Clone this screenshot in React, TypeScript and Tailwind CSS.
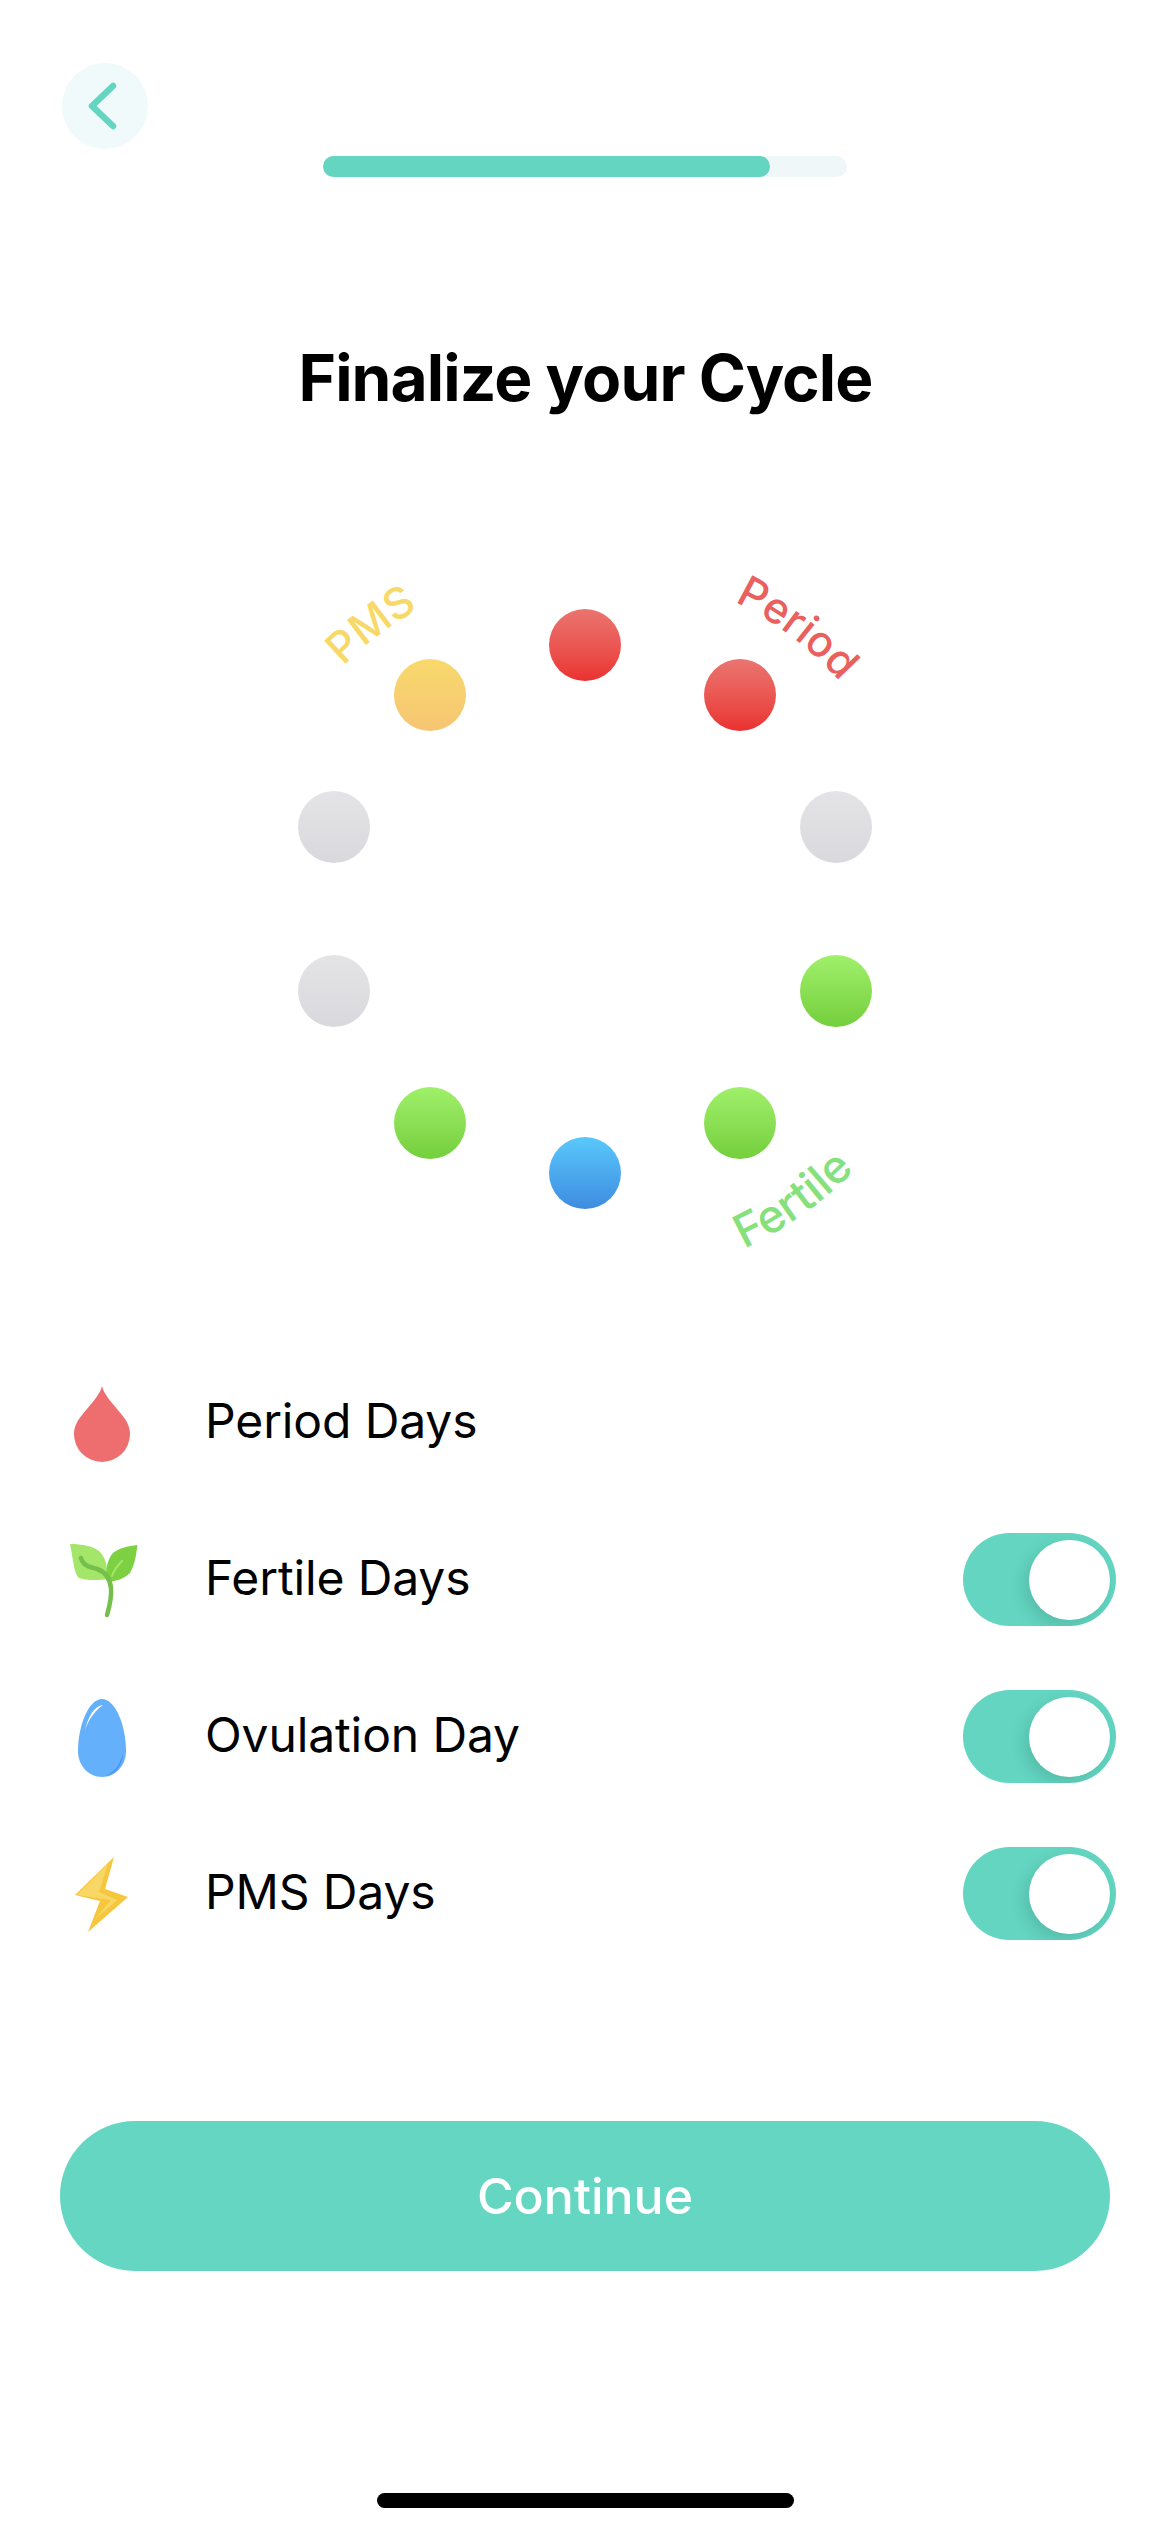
const cx = 585;
const cy = 348; // wheel centre inside the 740px-high canvas

// Arc that the curved labels run along, angle in degrees clockwise from the top.
const pt = (r: number, deg: number) => {
  const a = (deg * Math.PI) / 180;
  return `${(cx + r * Math.sin(a)).toFixed(1)} ${(cy - r * Math.cos(a)).toFixed(1)}`;
};
const arc = (r: number, from: number, to: number, sweep: number) =>
  `M${pt(r, from)} A${r} ${r} 0 0 ${sweep} ${pt(r, to)}`;

const dots = [
  "left-[549px] top-[49px] from-[#ea7470] to-[#ea3030]",
  "left-[704px] top-[99px] from-[#ea7470] to-[#ea3030]",
  "left-[800px] top-[231px] from-[#e4e3e6] to-[#d9d8dc]",
  "left-[800px] top-[395px] from-[#a0f06a] to-[#74cf3c]",
  "left-[704px] top-[527px] from-[#a0f06a] to-[#74cf3c]",
  "left-[549px] top-[577px] from-[#5ac8fb] to-[#3f8ce0]",
  "left-[394px] top-[527px] from-[#a0f06a] to-[#74cf3c]",
  "left-[298px] top-[395px] from-[#e4e3e6] to-[#d9d8dc]",
  "left-[298px] top-[231px] from-[#e4e3e6] to-[#d9d8dc]",
  "left-[394px] top-[99px] from-[#f8d96b] to-[#f6c573]",
];

function Drop() {
  return (
    <svg width="68" height="80" viewBox="0 0 68 80">
      <path d="M32 3C34 12 44 22 52 32C57 38 60 44 60 51A28 28 0 0 1 4 51C4 44 7 38 12 32C20 22 30 12 32 3Z" fill="#ee6e70" />
    </svg>
  );
}

function Sprout() {
  return (
    <svg width="68" height="80" viewBox="0 0 68 80">
      <path d="M0 4C12 4 24 6 30 12C36 18 38 28 37 39C28 41 14 40 9 38C4 34 3 18 0 4Z" fill="#a3e66a" />
      <path d="M67.500 5C66 14 66 22 60 33C54 39 46 41 39 42C35 34 36 22 42 14C48 8 58 6 67.500 5Z" fill="#7ed043" />
      <path d="M52 21C48 25 44 30 42 36" stroke="#a3e66a" strokeWidth="2" fill="none" strokeLinecap="round" />
      <path d="M11 18C13 26 20 27 27 29C36 32 40 39 41 48C42 58 39 68 37 75" stroke="#75bf4b" strokeWidth="4.500" fill="none" strokeLinecap="round" />
    </svg>
  );
}

function Egg() {
  return (
    <svg width="68" height="80" viewBox="0 0 68 80">
      <path d="M32 2C45 2 56 28 56 54C56 69 45 80 32 80C19 80 8 69 8 54C8 28 19 2 32 2Z" fill="#64b0fb" />
      <path d="M35 79C46 78 53 67 53 56C50 68 44 76 35 79Z" fill="#4f90f5" />
      <path d="M33 8C24 9 18 20 15 33C19 21 26 13 33 8Z" fill="#ffffff" />
    </svg>
  );
}

function Bolt() {
  return (
    <svg width="68" height="80" viewBox="0 0 68 80">
      <path d="M44 3L5 41L30 47L18 78L58 43L35 35Z" fill="#f6c63c" />
      <path d="M38 10L7 41L41 46L24 66L47 46L29 38Z" fill="#f8d766" />
    </svg>
  );
}

function Toggle() {
  return (
    <div className="relative flex h-[93px] w-[153px] items-center justify-end overflow-hidden rounded-full bg-[#63d5c0] pr-[6px]">
      <div className="h-[80px] w-[81px] rounded-full bg-white shadow-[-5px_6px_14px_rgba(40,110,100,0.22)]" />
    </div>
  );
}

const rows = [
  { label: "Period Days", Icon: Drop, toggle: false },
  { label: "Fertile Days", Icon: Sprout, toggle: true },
  { label: "Ovulation Day", Icon: Egg, toggle: true },
  { label: "PMS Days", Icon: Bolt, toggle: true },
];

export default function App() {
  return (
    <div className="flex h-[2532px] w-[1170px] flex-col overflow-hidden bg-white font-['Inter',sans-serif] text-black">
      <header className="flex flex-col pt-[63px]">
        <button className="ml-[62px] flex h-[86px] w-[86px] items-center justify-center rounded-full bg-[#f0fafb]">
          <svg width="30" height="48" viewBox="0 0 30 48" className="-ml-[6px]">
            <path d="M26 4L5 24L26 44" stroke="#63d5c0" strokeWidth="6.500" fill="none" strokeLinecap="round" strokeLinejoin="round" />
          </svg>
        </button>
        <div className="ml-[323px] mt-[7px] h-[21px] w-[524px] rounded-full bg-[#eff7f9]">
          <div className="h-full w-[447px] rounded-full bg-[#63d5c0]" />
        </div>
      </header>

      <h1 className="ml-[1px] mt-[163px] h-[76px] text-center text-[64px] font-bold leading-[76px] tracking-[-0.9px]">
        Finalize your Cycle
      </h1>

      <section className="relative mt-[144px] h-[740px] w-full">
        {dots.map((d) => (
          <div key={d} className={`absolute h-[72px] w-[72px] rounded-full bg-linear-to-b ${d}`} />
        ))}
        <svg className="absolute inset-0" width="1170" height="740" viewBox="0 0 1170 740">
          <defs>
            <path id="arc-period" d={arc(341, 26, 80, 1)} />
            <path id="arc-pms" d={arc(342, -45, 20, 1)} />
            <path id="arc-fertile" d={arc(376, 155, 90, 0)} />
          </defs>
          <g fontFamily="'Inter', sans-serif" fontWeight="500">
            <text fontSize="43" fill="#e9605f">
              <textPath href="#arc-period">Period</textPath>
            </text>
            <text fontSize="43" fill="#f8d968">
              <textPath href="#arc-pms">PMS</textPath>
            </text>
            <text fontSize="46" fill="#86e07c">
              <textPath href="#arc-fertile">Fertile</textPath>
            </text>
          </g>
        </svg>
      </section>

      <section className="mt-[44px] flex flex-col">
        {rows.map(({ label, Icon, toggle }) => (
          <div key={label} className="flex h-[157px] items-center pl-[70px] pr-[54px]">
            <div className="w-[135px]">
              <Icon />
            </div>
            <span className="-mt-[3px] flex-1 text-[48px] leading-[58px] tracking-[-0.12px]">{label}</span>
            {toggle && <Toggle />}
          </div>
        ))}
      </section>

      <button className="mx-[60px] mt-[149px] h-[150px] rounded-full bg-[#64d6c2] text-[50px] font-medium text-white">
        Continue
      </button>

      <div className="ml-[377px] mt-[222px] h-[15px] w-[417px] rounded-full bg-black" />
    </div>
  );
}
